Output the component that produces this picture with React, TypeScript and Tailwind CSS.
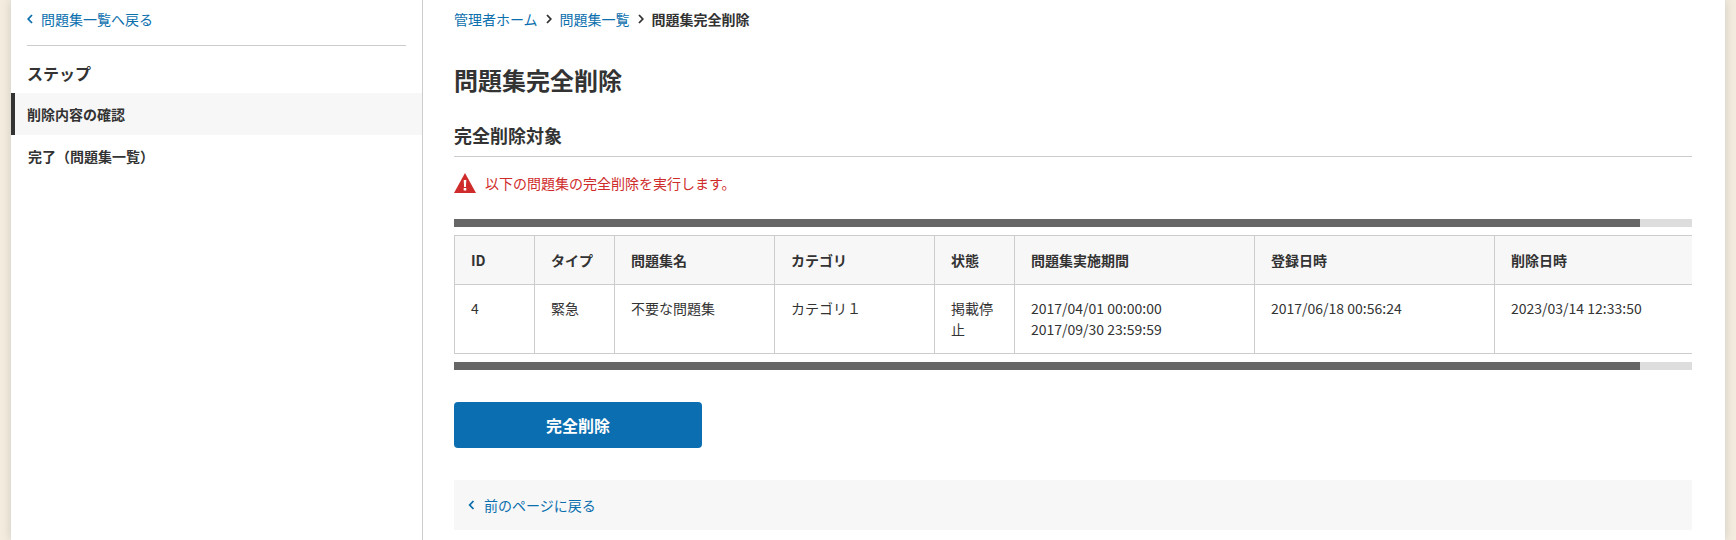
import React from 'react';

const font = { fontFamily: '"Noto Sans CJK JP", "Noto Sans", sans-serif' };

const Chevron: React.FC<{ dir: 'left' | 'right'; className?: string }> = ({ dir, className }) => (
  <svg viewBox="0 0 6 10" className={className} fill="none" stroke="currentColor" strokeWidth="1.8">
    {dir === 'left' ? <path d="M5 1 1.2 5 5 9" /> : <path d="M1 1l3.8 4L1 9" />}
  </svg>
);

const columns = [
  { label: 'ID', width: 'w-[80px]' },
  { label: 'タイプ', width: 'w-[80px]' },
  { label: '問題集名', width: 'w-[160px]' },
  { label: 'カテゴリ', width: 'w-[160px]' },
  { label: '状態', width: 'w-[80px]' },
  { label: '問題集実施期間', width: 'w-[240px]' },
  { label: '登録日時', width: 'w-[240px]' },
  { label: '削除日時', width: 'w-[252px]' },
];

const ScrollBar: React.FC = () => (
  <div className="h-2 w-full bg-[#dddddd]">
    <div className="h-2 w-[1186px] bg-[#666666]" />
  </div>
);

const App: React.FC = () => {
  return (
    <div className="h-[540px] overflow-hidden bg-[#f3ecdf] px-[11px] text-[14px] text-[#333333]" style={font}>
      <div className="flex h-full bg-white shadow-[0_0_10px_rgba(0,0,0,0.15)]">
        <aside className="h-full w-[412px] shrink-0 border-r border-[#cccccc]">
          <div className="px-4">
            <a className="flex h-[45px] items-center gap-2 pb-[7px] text-[#0b6fae]">
              <Chevron dir="left" className="h-[10px] w-[6px]" />
              問題集一覧へ戻る
            </a>
            <div className="h-px bg-[#cccccc]" />
            <h2 className="h-[47px] pt-[15px] text-[16px] leading-[24px] font-bold">ステップ</h2>
          </div>
          <ul className="font-bold">
            <li className="flex h-[42px] items-center border-l-4 border-[#333333] bg-[#f7f7f7] pl-3">削除内容の確認</li>
            <li className="flex h-[42px] items-center pl-[17px]">完了（問題集一覧）</li>
          </ul>
        </aside>
        <main className="min-w-0 flex-1 pr-[33px] pl-[31px]">
          <nav className="flex h-[38px] items-center gap-2">
            <a className="text-[#0b6fae]">管理者ホーム</a>
            <Chevron dir="right" className="h-[10px] w-[6px]" />
            <a className="text-[#0b6fae]">問題集一覧</a>
            <Chevron dir="right" className="h-[10px] w-[6px]" />
            <span className="font-bold">問題集完全削除</span>
          </nav>
          <h1 className="pt-6 text-[24px] leading-[36px] font-bold">問題集完全削除</h1>
          <h2 className="mt-6 border-b border-[#cccccc] pb-[7px] text-[18px] leading-[27px] font-bold">完全削除対象</h2>
          <p className="mt-[14px] flex h-[24px] items-center gap-[9px] text-[#cf2b2b]">
            <svg viewBox="0 0 22 20" className="h-[20px] w-[22px]">
              <path d="M11 0 22 20H0Z" fill="#cf2b2b" />
              <path d="M9.7 7h2.6l-.4 7h-1.8Z M9.7 15h2.6v2.6H9.7Z" fill="#ffffff" />
            </svg>
            以下の問題集の完全削除を実行します。
          </p>
          <div className="mt-[24px]">
            <ScrollBar />
          </div>
          <div className="my-2 overflow-hidden">
            <table className="w-[1292px] table-fixed border-collapse">
              <thead>
                <tr className="bg-[#f7f7f7]">
                  {columns.map((c) => (
                    <th key={c.label} className={`${c.width} h-[49px] border border-[#cccccc] px-4 text-left font-bold`}>
                      {c.label}
                    </th>
                  ))}
                </tr>
              </thead>
              <tbody className="align-top leading-[21px]">
                <tr>
                  <td className="h-[69px] border border-[#cccccc] px-4 py-[13px]">4</td>
                  <td className="border border-[#cccccc] px-4 py-[13px]">緊急</td>
                  <td className="border border-[#cccccc] px-4 py-[13px]">不要な問題集</td>
                  <td className="border border-[#cccccc] px-4 py-[13px]">カテゴリ１</td>
                  <td className="border border-[#cccccc] px-4 py-[13px]">掲載停止</td>
                  <td className="border border-[#cccccc] px-4 py-[13px]">
                    2017/04/01 00:00:00
                    <br />
                    2017/09/30 23:59:59
                  </td>
                  <td className="border border-[#cccccc] px-4 py-[13px]">2017/06/18 00:56:24</td>
                  <td className="border border-[#cccccc] px-4 py-[13px]">2023/03/14 12:33:50</td>
                </tr>
              </tbody>
            </table>
          </div>
          <ScrollBar />
          <button className="mt-8 block h-[46px] w-[248px] rounded bg-[#0a6eb0] text-[16px] font-bold text-white">完全削除</button>
          <div className="mt-8 flex h-[50px] items-center gap-[9px] bg-[#f7f7f7] pl-[14px] text-[#0b6fae]">
            <Chevron dir="left" className="h-[10px] w-[7px]" />
            前のページに戻る
          </div>
        </main>
      </div>
    </div>
  );
};

export default App;
